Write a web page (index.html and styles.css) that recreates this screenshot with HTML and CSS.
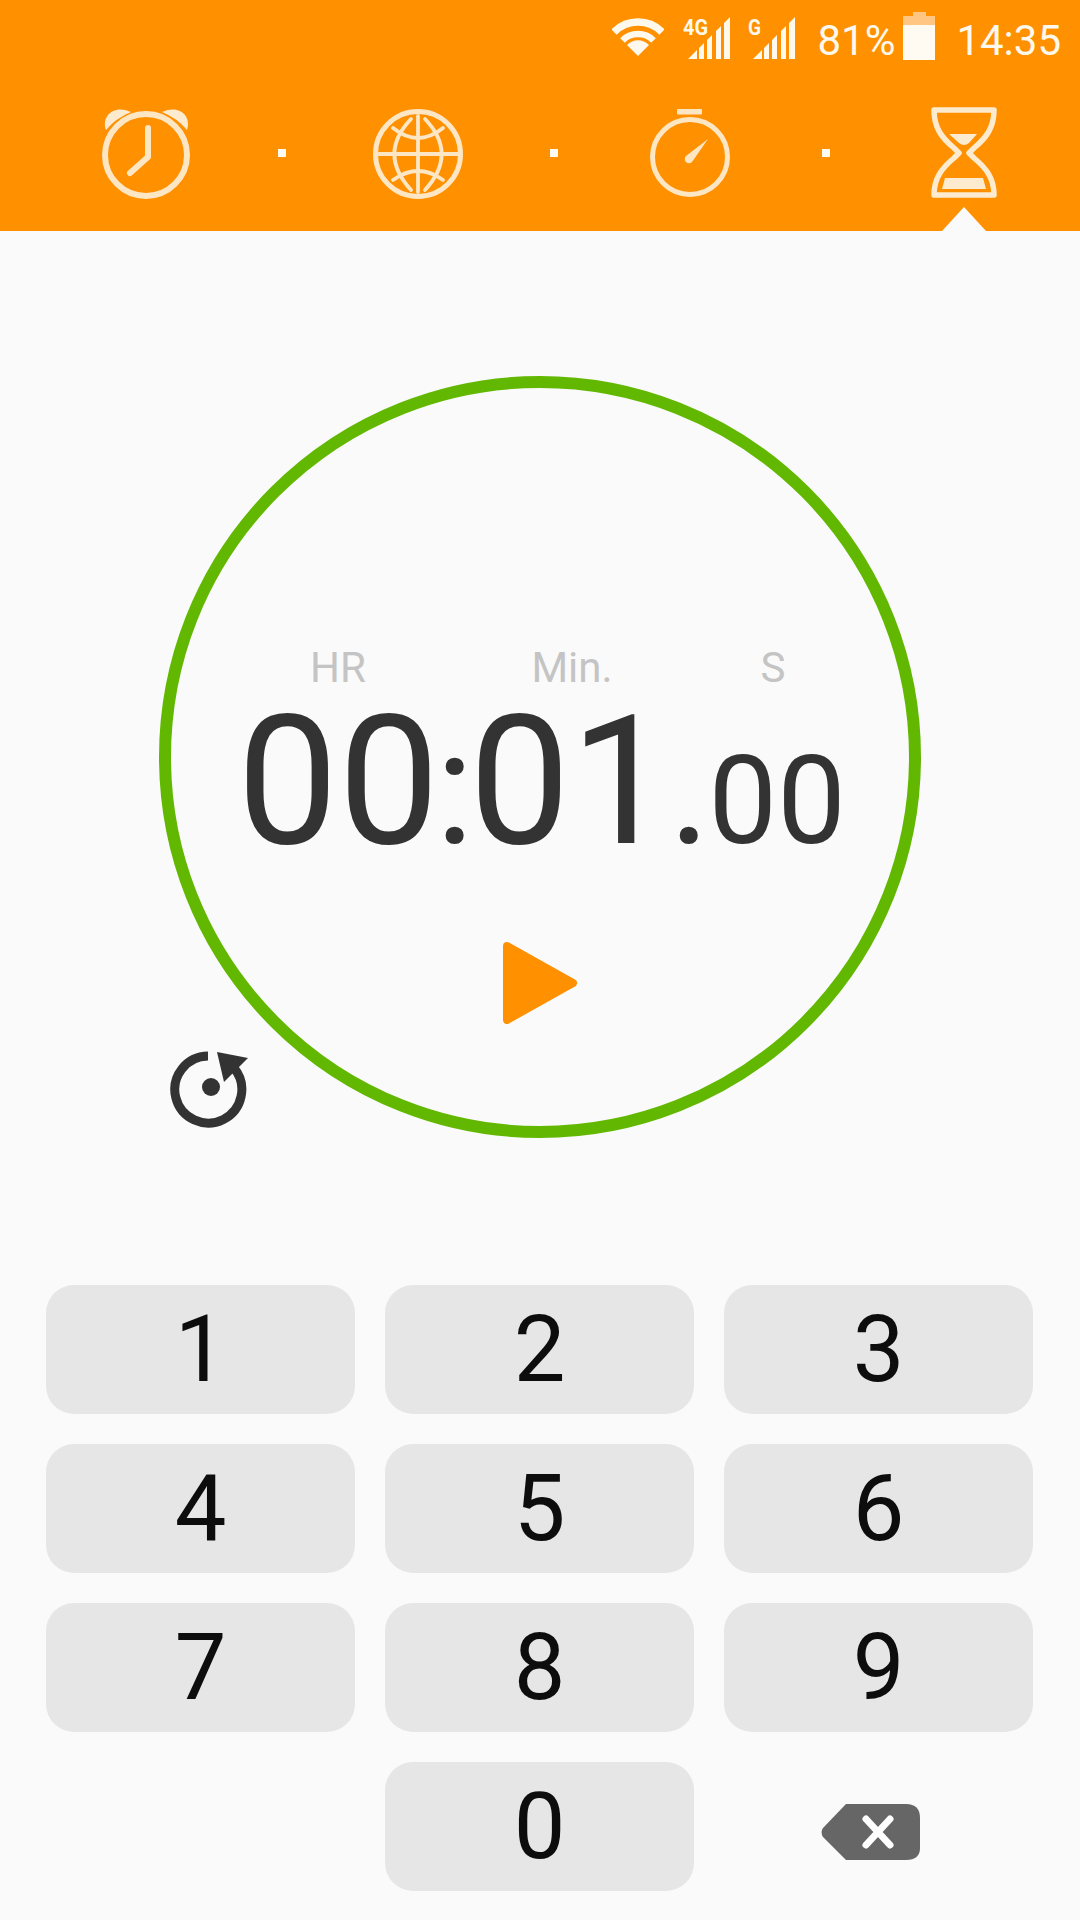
FILE: index.html
```html
<!DOCTYPE html>
<html lang="en">
<head>
  <meta charset="UTF-8">
  <title>Timer</title>
  <link rel="stylesheet" href="styles.css">
</head>
<body>

<!-- orange header -->
<header class="header">
  <div class="status">
    <svg class="wifi" width="52" height="40" viewBox="0 0 52 40">
      <path d="M2 14A34 34 0 0 1 50 14" fill="none" stroke="#fff8ec" stroke-width="7.5"/>
      <path d="M10.5 22.5A22 22 0 0 1 41.5 22.5" fill="none" stroke="#fff8ec" stroke-width="6.5"/>
      <path d="M26 38L15 27A15 15 0 0 1 37 27Z" fill="#fff8ec"/>
    </svg>
    <svg class="signal" width="48" height="49" viewBox="0 -5 48 49">
      <text class="net" x="0" y="18" textLength="25" lengthAdjust="spacingAndGlyphs">4G</text>
      <path d="M5 42L14 33V42ZM16 31L21 26V42H16ZM24 23L29 18V42H24ZM33 14L38 9V42H33ZM41 6L47 0V42H41Z" fill="#fff8ec"/>
    </svg>
    <svg class="signal signal-two" width="48" height="49" viewBox="0 -5 48 49">
      <text class="net" x="0" y="18" textLength="13" lengthAdjust="spacingAndGlyphs">G</text>
      <path d="M5 42L14 33V42ZM16 31L21 26V42H16ZM24 23L29 18V42H24ZM33 14L38 9V42H33ZM41 6L47 0V42H41Z" fill="#fff8ec"/>
    </svg>
    <span class="status-text pct">81%</span>
    <svg class="battery" width="32" height="48" viewBox="0 0 32 48">
      <path d="M10 0H23V4H32V13H0V4H10Z" fill="#ffc583"/>
      <rect x="0" y="13" width="32" height="35" fill="#fffaf2"/>
    </svg>
    <span class="status-text clock">14:35</span>
  </div>

  <nav class="tabs">
    <svg class="tab-icon" viewBox="0 0 100 100">
      <g fill="#fdebd0">
        <path d="M10 26C5 12 18 0 35 8Q20 14 10 26Z"/>
        <path d="M91 26C96 12 83 0 66 8Q81 14 91 26Z"/>
      </g>
      <circle cx="50" cy="51" r="41" fill="none" stroke="#fde6c4" stroke-width="6"/>
      <path d="M52 24V53L34 69" fill="none" stroke="#fde6c4" stroke-width="6" stroke-linecap="round" stroke-linejoin="round"/>
    </svg>
    <i class="tab-dot"></i>
    <svg class="tab-icon" viewBox="0 0 100 100">
      <circle cx="50" cy="50" r="42.5" fill="none" stroke="#fde6c4" stroke-width="5"/>
      <g fill="none" stroke="#fde6c4" stroke-width="3.8" stroke-linecap="round">
        <path d="M50 12V88M11 50H90"/>
        <path d="M43 15C21 38 21 62 43 86M57 15C79 38 79 62 57 86"/>
        <path d="M25 24Q50 44 75 24M25 76Q50 58 75 76"/>
      </g>
    </svg>
    <i class="tab-dot"></i>
    <svg class="tab-icon" viewBox="0 0 100 100">
      <rect x="37" y="5" width="25" height="5.5" rx="1" fill="#fde6c4"/>
      <circle cx="50" cy="53" r="37.5" fill="none" stroke="#fde6c4" stroke-width="5"/>
      <path d="M68 35L52 58A4 4 0 0 1 46 52Z" fill="#fde6c4"/>
    </svg>
    <i class="tab-dot"></i>
    <svg class="tab-icon" viewBox="0 0 100 100">
      <path d="M22 6H82C82 24 74 34 62 44L57 49L62 54C74 64 82 74 82 91H22C22 74 30 64 42 54L47 49L42 44C30 34 22 24 22 6Z" fill="none" stroke="#fdebd0" stroke-width="5.5" stroke-linejoin="round"/>
      <path d="M37 30H65L57 39Q52 43 47 39Z" fill="#fdebd0"/>
      <path d="M33 74H71L74 85H30Z" fill="#fdebd0"/>
    </svg>
  </nav>
  <i class="tab-arrow"></i>
</header>

<!-- timer -->
<main class="timer">
  <div class="ring">
    <div class="units">
      <span>HR</span>
      <span>Min.</span>
      <span>S</span>
    </div>
    <div class="time">00<span class="colon">:</span>01<span class="point">.</span><small>00</small></div>
    <svg class="play" width="76" height="84" viewBox="0 0 76 84">
      <path d="M4 6L70 43L4 80Z" fill="#ff9000" stroke="#ff9000" stroke-width="8" stroke-linejoin="round"/>
    </svg>
  </div>
  <svg class="reset" width="80" height="80" viewBox="0 0 80 80">
    <path d="M38 7A33.5 33.5 0 1 0 64 19" fill="none" stroke="#333" stroke-width="9"/>
    <circle cx="41" cy="38" r="9" fill="#333"/>
    <path d="M47 3L78 9L54 33Z" fill="#333"/>
  </svg>
</main>

<!-- number keys -->
<section class="keypad">
  <button class="key">1</button>
  <button class="key">2</button>
  <button class="key">3</button>
  <button class="key">4</button>
  <button class="key">5</button>
  <button class="key">6</button>
  <button class="key">7</button>
  <button class="key">8</button>
  <button class="key">9</button>
  <div></div>
  <button class="key">0</button>
  <div class="backspace">
    <svg width="102" height="58" viewBox="0 0 102 58">
      <path d="M26 0H86Q100 0 100 14V44Q100 56 86 56H26L3 33Q0 28 3 24Z" fill="#666"/>
      <path d="M46 15L70 41M70 15L46 41" stroke="#fff" stroke-width="7" stroke-linecap="round"/>
    </svg>
  </div>
</section>

</body>
</html>
```

FILE: styles.css
```css
* { box-sizing: border-box; }
body { margin: 0; background-color: #fafafa; font-family: Roboto, sans-serif; color: #333; }

/* header */
.header { position: relative; height: 231px; background-color: #ff9000; }
.status { display: flex; justify-content: flex-end; align-items: flex-start; height: 62px; padding: 12px 19px 0 0; }
.status svg { display: block; flex: none; }
.wifi { margin-top: 6px; }
.signal { margin-left: 19px; }
.signal-two { margin-left: 17px; }
.net { font-family: Roboto, sans-serif; font-size: 22px; font-weight: 700; fill: #fff8ec; }
.status-text { font-size: 42px; line-height: 50px; margin-top: 4px; color: #fff8ec; }
.pct { margin-left: 21px; }
.battery { margin-left: 8px; }
.clock { margin-left: 21px; }

.tabs { display: grid; grid-template-columns: repeat(7, 136px); padding-left: 78px; padding-top: 42px; justify-items: center; align-items: center; }
.tab-icon { display: block; width: 100px; height: 100px; }
.tab-dot { display: block; width: 8px; height: 8px; background-color: #fffaf2; margin-bottom: 2px; }
.tab-arrow { position: absolute; left: 942px; bottom: 0; border-left: 22px solid transparent; border-right: 22px solid transparent; border-bottom: 24px solid #fafafa; }

/* timer */
.timer { position: relative; padding-top: 145px; }
.ring { width: 762px; height: 762px; margin: 0 auto; border: 12px solid #62b800; border-radius: 50%; padding-top: 256px; }
.units { display: grid; grid-template-columns: 234px 234px 168px; padding-left: 50px; font-size: 42px; line-height: 48px; color: #c4c4c4; text-align: center; }
.time { height: 180px; padding-left: 66px; font-size: 180px; line-height: 180px; white-space: nowrap; }
.colon { font-size: 160px; margin: 0 -5px 0 -4px; }
.point { font-size: 160px; margin-left: -3px; }
.time small { font-size: 122px; margin-left: -2px; }
.play { display: block; margin: 68px 0 0 332px; }
.reset { position: absolute; left: 170px; top: 818px; }

/* keypad */
.keypad { display: grid; grid-template-columns: repeat(3, 309px); grid-auto-rows: 129px; column-gap: 30px; row-gap: 30px; padding: 147px 0 0 46px; }
.key { border: none; border-radius: 28px; background-color: #e6e6e6; color: #0d0d0d; font-family: Roboto, sans-serif; font-size: 92px; line-height: 1; padding: 1px 0 0; }
.backspace { display: flex; align-items: center; justify-content: center; padding-right: 16px; padding-top: 12px; }
.backspace svg { display: block; }
```
